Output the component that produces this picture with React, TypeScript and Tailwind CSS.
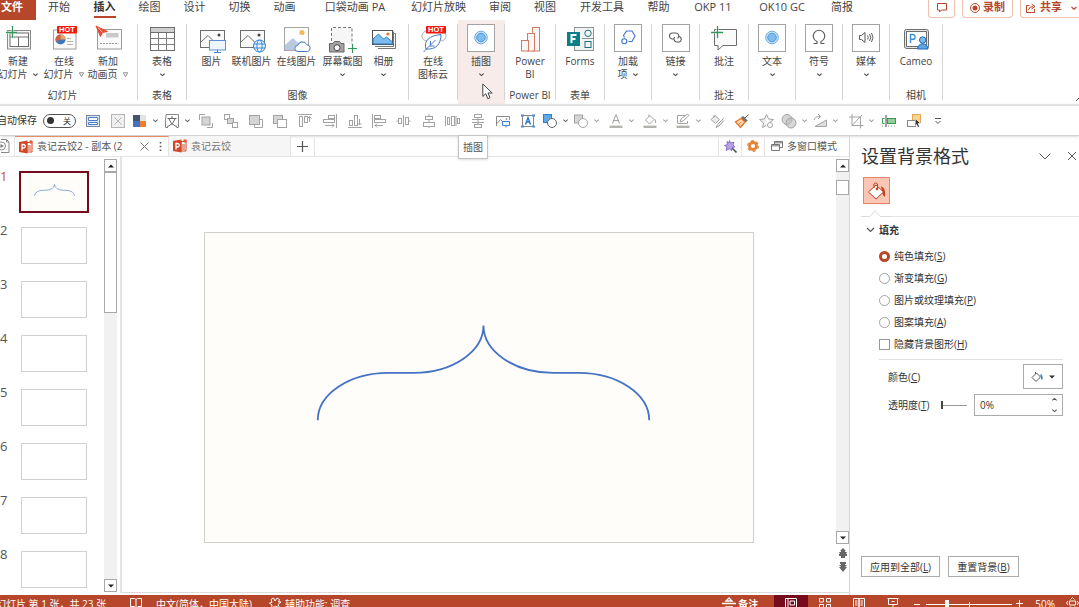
import { useState } from 'react';
import type { ReactNode } from 'react';

const FONT = "font-['Open_Sans','Noto_Sans_CJK_SC',sans-serif]";

/* ---------- small shared glyphs ---------- */

function Chevron({ className = 'w-[7px] h-[7px]' }: { className?: string }) {
  return (
    <svg viewBox="0 0 8 8" className={className} fill="none" stroke="currentColor" strokeWidth="1.2">
      <path d="M1.500 3 4 5.200 6.500 3" />
    </svg>
  );
}

function Triangle() {
  return (
    <svg viewBox="0 0 8 8" className="w-[7px] h-[7px]" fill="none" stroke="#777" strokeWidth="0.9">
      <path d="M1.500 2h5L4 6.500z" />
    </svg>
  );
}

function Hot() {
  return (
    <>
      <rect x="7" y="2" width="20" height="7.500" rx="0.8" fill="#f5180a" stroke="none" />
      <text x="17" y="8.400" textAnchor="middle" fontSize="7.500" fontWeight="800" fill="#fff" stroke="none" fontFamily="Liberation Sans, sans-serif">
        HOT
      </text>
    </>
  );
}

function Big({ children }: { children: ReactNode }) {
  return (
    <svg viewBox="0 0 28 28" className="w-7 h-7 shrink-0 overflow-visible" fill="none" stroke="#6e6e6e">
      {children}
    </svg>
  );
}

function Framed({ children }: { children: ReactNode }) {
  return (
    <span className="flex w-7 h-7 shrink-0 items-center justify-center border border-[#a3a3a3] bg-white">
      <svg viewBox="0 0 26 26" className="w-[26px] h-[26px]" fill="none" stroke="#5a5a5a">
        {children}
      </svg>
    </span>
  );
}

const blueDot = (
  <Framed>
    <circle cx="13" cy="12.500" r="6.300" fill="#d5e8f8" stroke="#5ea5e2" strokeWidth="0.9" />
    <circle cx="13" cy="12.500" r="4.300" fill="#7fbcee" stroke="#3c8fdb" strokeWidth="0.9" />
  </Framed>
);

/* ---------- ribbon data ---------- */

type Tool = { id: string; lines: ReactNode[]; icon: ReactNode; width: string };
type Group = { id: string; width: string; caption?: string; captionClass?: string; tools: Tool[]; active?: boolean };

const groups: Group[] = [
  {
    id: 'slides',
    width: 'w-[138px]',
    caption: '幻灯片',
    captionClass: 'pr-3',
    tools: [
      {
        id: 'new',
        width: 'w-9',
        lines: ['新建', <>幻灯片 <Chevron /></>],
        icon: (
          <Big>
            <rect x="3.500" y="6.500" width="23" height="18.500" fill="#f3f3f3" stroke="#8a8a8a" />
            <rect x="6" y="9" width="18.500" height="13.500" fill="#fff" />
            <path d="M6 13h18.500M14.500 13v9.500" />
            <path d="M8.500 2v12M2 8.500h11" stroke="#fff" strokeWidth="2" />
            <path d="M8.500 2v12M2 8.500h11" stroke="#2f9a5c" strokeWidth="1.300" />
          </Big>
        ),
      },
      {
        id: 'online',
        width: 'w-14',
        lines: ['在线', <>幻灯片 <Triangle /></>],
        icon: (
          <Big>
            <rect x="3.500" y="6" width="22.500" height="19" fill="#fafafa" stroke="#a0a0a0" />
            <circle cx="10.500" cy="15.500" r="5" fill="#3f77bf" stroke="none" />
            <path d="M10.500 15.500v-5a5 5 0 0 0-4.600 7z" fill="#d8603e" stroke="none" />
            <path d="M10.500 15.500v-5a5 5 0 0 1 5 5z" fill="#f0a35c" stroke="none" />
            <path d="M17 14.500h4M17 17.500h6M17 20.500h6" stroke="#aaa" strokeWidth="0.9" />
            <Hot />
          </Big>
        ),
      },
      {
        id: 'anim',
        width: 'w-8',
        lines: ['新加', <>动画页 <Triangle /></>],
        icon: (
          <Big>
            <rect x="3.500" y="5.500" width="24" height="19.500" fill="#fafafa" stroke="#9a9a9a" />
            <rect x="12" y="9" width="12.500" height="4.500" fill="#c9c9c9" stroke="none" />
            <path d="M6 19.500h18.500" strokeDasharray="2 1" stroke="#999" />
            <path d="M2 2 13.500 7.500 8.500 8.500 6.500 12.500z" fill="#ea4a31" stroke="#ea4a31" />
            <path d="m4 3.500 4.500 5" stroke="#fff" strokeWidth="0.7" />
          </Big>
        ),
      },
    ],
  },
  {
    id: 'table',
    width: 'w-[49px]',
    caption: '表格',
    tools: [
      {
        id: 'table',
        width: 'w-12',
        lines: ['表格', <Chevron />],
        icon: (
          <Big>
            <rect x="2.500" y="3.500" width="24" height="23" fill="#fff" />
            <rect x="2.500" y="3.500" width="24" height="5" fill="#cfcfcf" />
            <path d="M2.500 14.500h24M2.500 20.500h24M10.500 8.500v18M18.500 8.500v18" stroke="#7d7d7d" />
          </Big>
        ),
      },
    ],
  },
  {
    id: 'images',
    width: 'w-[222px]',
    caption: '图像',
    tools: [
      {
        id: 'picture',
        width: 'w-10',
        lines: ['图片'],
        icon: (
          <Big>
            <rect x="2.500" y="6.500" width="24" height="17" fill="#fafafa" />
            <path d="m3 18 7-6.500 7 7" />
            <circle cx="21" cy="11" r="1.500" fill="#444" stroke="none" />
            <rect x="11.500" y="16.500" width="16" height="9.500" fill="#eef5fc" stroke="#5b90d6" />
            <path d="M19.500 26v2M16 28.500h7" stroke="#3f7fd0" />
          </Big>
        ),
      },
      {
        id: 'online-picture',
        width: 'w-10',
        lines: ['联机图片'],
        icon: (
          <Big>
            <rect x="2.500" y="6.500" width="24" height="17" fill="#fafafa" />
            <path d="m3 18 7-6.500 7 7" />
            <circle cx="21" cy="11" r="1.500" fill="#444" stroke="none" />
            <circle cx="21.500" cy="22" r="6" fill="#eaf4fd" stroke="#2c82d2" />
            <ellipse cx="21.500" cy="22" rx="2.600" ry="6" stroke="#2c82d2" strokeWidth="0.9" />
            <path d="M16 20h11M16 24h11" stroke="#2c82d2" strokeWidth="0.9" />
          </Big>
        ),
      },
      {
        id: 'web-picture',
        width: 'w-[50px]',
        lines: ['在线图片'],
        icon: (
          <Big>
            <rect x="1.500" y="3.500" width="24" height="23" fill="#fdfdfd" stroke="#a5a5a5" />
            <path d="M2 26V21l8-7 5 5 3-2 7 6v3z" fill="#b9c9de" stroke="none" />
            <circle cx="19" cy="8.500" r="2.600" fill="#f0bb5e" stroke="none" />
            <path d="M15 27.500a3 3 0 0 1-.3-6 5 5 0 0 1 9.300-.8 3.500 3.500 0 0 1 .8 6.800z" fill="#fff" stroke="#4377c8" />
          </Big>
        ),
      },
      {
        id: 'screenshot',
        width: 'w-[42px]',
        lines: ['屏幕截图', <Chevron />],
        icon: (
          <Big>
            <path d="M2.500 17V3.500h20.500V20" strokeDasharray="3 2" stroke="#777" fill="#f6f6f6" />
            <path d="M.5 19.500h3.500l1.500-2h5l1.500 2h3v8.500H.5z" fill="#a5a5a5" stroke="#666" />
            <circle cx="8" cy="23.700" r="3" fill="#fff" stroke="#444" />
            <path d="M23.500 20v9M19 24.500h9" stroke="#2f9a5c" strokeWidth="1.200" />
          </Big>
        ),
      },
      {
        id: 'album',
        width: 'w-10',
        lines: ['相册', <Chevron />],
        icon: (
          <Big>
            <path d="M8 24.500h17.500V9.500H22M5 22.500h18.500V7.500" stroke="#777" />
            <rect x="2.500" y="6.500" width="20" height="14" fill="#fff" stroke="#555" />
            <path d="m3 15 5.500-5 5 5 3-2 6 5v2H3z" fill="#7fbcee" stroke="#2474c4" strokeWidth="0.9" />
            <circle cx="18" cy="10" r="1.600" fill="#e4732f" stroke="none" />
          </Big>
        ),
      },
    ],
  },
  {
    id: 'icon-cloud',
    width: 'w-[49px]',
    tools: [
      {
        id: 'cloud',
        width: 'w-12',
        lines: ['在线', '图标云'],
        icon: (
          <Big>
            <path d="M8 7a5 5 0 1 0 0 10M22 7a4.500 4.500 0 0 1 0 10" stroke="#b0b0b0" />
            <path d="M7 25C4.500 17 10 11.500 22 10.500 22 20 17 26 7 25z" fill="#fff" stroke="#4377c8" />
            <path d="M4.500 28 16.500 16M11.500 21v-4M10.500 22h5" stroke="#4377c8" />
            <Hot />
          </Big>
        ),
      },
    ],
  },
  {
    id: 'illustrations',
    width: 'w-[47px]',
    active: true,
    tools: [{ id: 'illus', width: 'w-11', lines: ['插图', <Chevron />], icon: blueDot }],
  },
  {
    id: 'powerbi',
    width: 'w-[51px]',
    caption: 'Power BI',
    tools: [
      {
        id: 'powerbi',
        width: 'w-12',
        lines: ['Power', 'BI'],
        icon: (
          <Big>
            <g fill="#fdf8f6" stroke="#cf7b66">
              <rect x="16.500" y="3.500" width="7" height="23.500" />
              <rect x="11.500" y="9.500" width="7" height="17.500" />
              <rect x="5.500" y="16.500" width="7" height="10.500" />
            </g>
          </Big>
        ),
      },
    ],
  },
  {
    id: 'forms',
    width: 'w-[49px]',
    caption: '表单',
    tools: [
      {
        id: 'forms',
        width: 'w-12',
        lines: ['Forms'],
        icon: (
          <Big>
            <rect x="8.500" y="3.500" width="19" height="23" fill="#f2f4f4" stroke="#8d9696" />
            <path d="M16 14.500h12" stroke="#8d9696" />
            <circle cx="22" cy="9.300" r="3.200" stroke="#1d6f80" />
            <rect x="19" y="17.500" width="6" height="6" stroke="#1d6f80" />
            <rect x="1" y="8" width="13" height="14" fill="#0b7f86" stroke="none" />
            <path d="M5.500 19v-8h5M5.500 15h4" stroke="#fff" strokeWidth="2" />
          </Big>
        ),
      },
    ],
  },
  {
    id: 'addins',
    width: 'w-[47px]',
    tools: [
      {
        id: 'addins',
        width: 'w-11',
        lines: ['加载', <>项 <Chevron /></>],
        icon: (
          <Framed>
            <path d="M9.500 12.500 8.500 10.500l3-4.500h5.500l3 5-3 5.500h-3.500" stroke="#3b73c9" strokeWidth="1.100" />
            <circle cx="9.300" cy="16.300" r="2.500" stroke="#3b73c9" strokeWidth="1.100" />
          </Framed>
        ),
      },
    ],
  },
  {
    id: 'links',
    width: 'w-12',
    tools: [
      {
        id: 'links',
        width: 'w-11',
        lines: ['链接', <Chevron />],
        icon: (
          <Framed>
            <path
              d="M11 14H9.500a3 3 0 0 1 0-6H13a3 3 0 0 1 1.500 5.500M15.500 11.500H16.500a3 3 0 0 1 0 5.500H13.500a3 3 0 0 1-1.800-5"
              strokeWidth="1.100"
            />
          </Framed>
        ),
      },
    ],
  },
  {
    id: 'comments',
    width: 'w-[49px]',
    caption: '批注',
    tools: [
      {
        id: 'comment',
        width: 'w-12',
        lines: ['批注'],
        icon: (
          <Big>
            <path d="M4.500 5.500h22v16H13l-5 4.500v-4.500H4.500z" fill="#fafafa" />
            <path d="M7.500 2v12M1 8.500h12" stroke="#fff" strokeWidth="2" />
            <path d="M7.500 2v12M1 8.500h12" stroke="#2f9a5c" strokeWidth="1.300" />
          </Big>
        ),
      },
    ],
  },
  {
    id: 'text',
    width: 'w-[47px]',
    tools: [{ id: 'text', width: 'w-11', lines: ['文本', <Chevron />], icon: blueDot }],
  },
  {
    id: 'symbols',
    width: 'w-[47px]',
    tools: [
      {
        id: 'symbols',
        width: 'w-11',
        lines: ['符号', <Chevron />],
        icon: (
          <Framed>
            <path d="M7.500 18.500h3.500v-2a5.800 5.800 0 1 1 4 0v2h3.500" strokeWidth="1.100" />
          </Framed>
        ),
      },
    ],
  },
  {
    id: 'media',
    width: 'w-[47px]',
    tools: [
      {
        id: 'media',
        width: 'w-11',
        lines: ['媒体', <Chevron />],
        icon: (
          <Framed>
            <path d="M6.500 10.500h2L12 7.500v10l-3.500-3h-2zM14.500 10.500q1.500 2 0 4M16.500 9q2.500 3.500 0 7M18.500 8q3 4.500 0 9" />
          </Framed>
        ),
      },
    ],
  },
  {
    id: 'camera',
    width: 'w-[53px]',
    caption: '相机',
    tools: [
      {
        id: 'cameo',
        width: 'w-12',
        lines: ['Cameo'],
        icon: (
          <Big>
            <rect x="2.500" y="5.500" width="24" height="19" rx="2" fill="#e4e4e4" />
            <rect x="4.500" y="7.500" width="20" height="15" fill="#fff" />
            <path d="M8.500 19v-8.500h2.200a2.300 2.300 0 0 1 0 4.800H8.500" stroke="#3c8fdb" strokeWidth="1.400" />
            <path d="M15.500 25a5 5 0 0 1 10.500 0z" fill="#5aa5e6" stroke="#1c6ab8" />
            <circle cx="20.700" cy="16" r="3.200" fill="#7fbcee" stroke="#1c6ab8" />
          </Big>
        ),
      },
    ],
  },
];

const tabs = [
  { label: '开始', width: 'w-[46px]' },
  { label: '插入', width: 'w-[45px]', active: true },
  { label: '绘图', width: 'w-[45px]' },
  { label: '设计', width: 'w-[45px]' },
  { label: '切换', width: 'w-[45px]' },
  { label: '动画', width: 'w-[45px]' },
  { label: '口袋动画 PA', width: 'w-[96px]' },
  { label: '幻灯片放映', width: 'w-[71px]' },
  { label: '审阅', width: 'w-[52px]' },
  { label: '视图', width: 'w-[38px]' },
  { label: '开发工具', width: 'w-[76px]' },
  { label: '帮助', width: 'w-[37px]' },
  { label: 'OKP 11', width: 'w-[72px]' },
  { label: 'OK10 GC', width: 'w-[66px]' },
  { label: '简报', width: 'w-[54px]' },
];

function TabBar() {
  return (
    <div className="flex h-5 shrink-0 items-start text-[11px] leading-[14px] text-[#444]">
      <button className="flex h-5 w-9 shrink-0 justify-center whitespace-nowrap bg-[#b7472a] pr-3 font-bold text-white">文件</button>
      {tabs.map((tab) => (
        <button key={tab.label} className={`flex shrink-0 flex-col items-center whitespace-nowrap ${tab.width}`}>
          <span className={tab.active ? 'border-b-2 border-[#b7472a] pb-0.5 font-bold text-[#333]' : ''}>{tab.label}</span>
        </button>
      ))}
      <div className="ml-auto flex shrink-0 gap-[7px] font-bold text-[#b7472a]">
        <button aria-label="批注" className="flex h-[18px] w-[27px] items-start justify-center rounded-b-sm border border-t-0 border-[#f0c0ae] pt-[3px]">
          <svg viewBox="0 0 12 10" className="h-[10px] w-3" fill="none" stroke="currentColor">
            <path d="M1.500.500h9v6.500H5.500l-2 2V7h-2z" />
          </svg>
        </button>
        <button className="flex h-[18px] w-[51px] items-start justify-center gap-[3px] whitespace-nowrap rounded-b-sm border border-t-0 border-[#f0c0ae]">
          <svg viewBox="0 0 10 10" className="mt-[3px] h-[10px] w-[10px]" fill="none" stroke="currentColor">
            <circle cx="5" cy="5" r="4.500" />
            <circle cx="5" cy="5" r="2.500" fill="currentColor" stroke="none" />
          </svg>
          录制
        </button>
        <button className="flex h-[18px] w-[59px] items-start gap-1 whitespace-nowrap rounded-bl-sm border border-r-0 border-t-0 border-[#f0c0ae] pl-[5px]">
          <svg viewBox="0 0 10 10" className="mt-[3px] h-[10px] w-[10px] shrink-0" fill="none" stroke="currentColor">
            <path d="M3.500 2.500H.5v7h8V6M2.500 7Q3 3.500 7 3.500M5.500 1 9 3.500 5.500 6" />
          </svg>
          共享
          <Chevron className="mt-1 ml-1 h-2 w-2 shrink-0" />
        </button>
      </div>
    </div>
  );
}

function Ribbon() {
  return (
    <div className="flex h-[84px] shrink-0 text-[10px] leading-[13px] text-[#444]">
      {groups.map((group) => (
        <section key={group.id} className={`flex shrink-0 ${group.width} ${group.active ? 'bg-[#f7ecea]' : ''}`}>
          <div className="flex min-w-0 flex-1 flex-col justify-between pb-0.5">
            <div className={`flex pt-1 ${group.id === 'slides' ? '' : 'justify-center'}`}>
              {group.tools.map((tool) => (
                <button key={tool.id} className={`flex shrink-0 flex-col items-center ${tool.width}`}>
                  {tool.icon}
                  <span className="mt-[3px] flex flex-col items-center">
                    {tool.lines.map((line, i) => (
                      <span key={i} className="flex h-[13px] items-center gap-1 whitespace-nowrap">
                        {line}
                      </span>
                    ))}
                  </span>
                </button>
              ))}
            </div>
            {group.caption && (
              <div className={`flex justify-center whitespace-nowrap ${group.captionClass ?? ''}`}>{group.caption}</div>
            )}
          </div>
          <span className="mt-1 h-[76px] w-px bg-[#d4d4d4]" />
        </section>
      ))}
      <button aria-label="折叠功能区" className="mt-auto ml-auto mb-px h-2 w-1 overflow-hidden">
        <svg viewBox="0 0 4 8" className="h-2 w-1" fill="none" stroke="#555">
          <path d="m1 6 4-4" />
        </svg>
      </button>
    </div>
  );
}

/* ---------- quick access toolbar ---------- */

function Small({ children, color = '#a3a3a3' }: { children: ReactNode; color?: string }) {
  return (
    <svg viewBox="0 0 16 16" className="h-4 w-4 shrink-0" fill="none" stroke={color}>
      {children}
    </svg>
  );
}

function QuickDrop({ label, width, muted, children }: { label: string; width: string; muted?: boolean; children: ReactNode }) {
  return (
    <button aria-label={label} className={`flex shrink-0 items-center gap-1 pl-0.5 ${width} ${muted ? 'text-[#a0a0a0]' : 'text-[#666]'}`}>
      {children}
      <Chevron />
    </button>
  );
}

const arrangeTools: [string, ReactNode][] = [
  ['组合', <Small><path d="M1.500 7V1.500H7M14.500 10v4.500H9" /><rect x="4" y="4" width="8" height="8" fill="#d5d5d5" /></Small>],
  ['取消组合', <Small><rect x="1.500" y="1.500" width="5" height="5" /><rect x="4.500" y="5.500" width="6" height="5" fill="#d5d5d5" /><rect x="9.500" y="9.500" width="5" height="5" fill="#fff" /></Small>],
  ['上移', <Small><path d="M12 6.500h2.500v8H6.500V12" /><rect x="1.500" y="2.500" width="10" height="9" fill="#d5d5d5" /></Small>],
  ['下移', <Small><rect x="1.500" y="2.500" width="9" height="8" fill="#d5d5d5" /><rect x="5.500" y="6.500" width="9" height="8" fill="#fff" /></Small>],
  ['顶端对齐', <Small><path d="M1 1.500h14M12.500 9V3.500M10.500 5.500l2-2 2 2" /><rect x="2.500" y="3.500" width="3" height="10" /><rect x="7.500" y="3.500" width="3" height="6" /></Small>],
  ['右对齐', <Small><path d="M14.500 1v14M3 12.500h9M10 10.500l2 2-2 2" /><rect x="6.500" y="2.500" width="6" height="3" /><rect x="1.500" y="6.500" width="11" height="3" /></Small>],
  ['底端对齐', <Small><path d="M1 14.500h14M12.500 6v6M10.500 10l2 2 2-2" /><rect x="2.500" y="7.500" width="3" height="5" /><rect x="7.500" y="2.500" width="3" height="10" /></Small>],
  ['左对齐', <Small><path d="M1.500 1v14M4 12.500h8M6 10.500l-2 2 2 2" /><rect x="3.500" y="2.500" width="6" height="3" /><rect x="3.500" y="6.500" width="11" height="3" /></Small>],
  ['水平居中', <Small><rect x="2.500" y="5.500" width="3" height="5" /><rect x="9.500" y="4.500" width="3" height="7" /><path d="M7.500 2v12M.5 8h2M12.500 8h2" /></Small>],
  ['垂直居中', <Small><rect x="4.500" y="3.500" width="7" height="3" /><rect x="2.500" y="9.500" width="11" height="4" /><path d="M8 1v2.500M8 6.500v3M8 13.500V15" /></Small>],
  ['横向分布', <Small><rect x="2.500" y="4.500" width="2" height="7" /><rect x="6.500" y="3.500" width="3" height="9" /><rect x="12.500" y="5.500" width="2" height="5" /><path d="M.5 3v10M11 3v10" /></Small>],
  ['纵向分布', <Small><rect x="4.500" y="1.500" width="7" height="3" /><rect x="4.500" y="11.500" width="7" height="3" /><path d="M2 6.500h12M2 9.500h12M8 4.500v7" /></Small>],
  ['更改图片', <Small color="#888"><path d="M1.500 13V3.500h13V7M1.500 11l4-4.500 3 3" /><circle cx="11.500" cy="6" r=".8" fill="#666" stroke="none" /><path d="M7.500 8.500h7v4h-7zM11 12.500v2" stroke="#3f7fd0" fill="#eef5fc" /></Small>],
  ['文本框', <Small color="#888"><rect x="2.500" y="2.500" width="11" height="11" /><path d="m5.500 11.500 2.500-7 2.500 7M6.500 9h3" stroke="#2474c4" strokeWidth="1.300" /><path d="M1 2.500h3M12 2.500h3M1 13.500h3M12 13.500h3" stroke="#4a8fd6" strokeWidth="2" /></Small>],
];

function QuickAccess() {
  const [autosave, setAutosave] = useState(false);
  return (
    <div className="flex h-8 shrink-0 items-center overflow-hidden border-t-2 border-b border-t-[#e1e1e1] border-b-[#d2d2d2] text-[10px] text-[#333] shadow-sm">
      <label htmlFor="autosave" className="-ml-1 w-[41px] shrink-0 text-right whitespace-nowrap">自动保存</label>
      <button
        id="autosave"
        role="switch"
        aria-checked={autosave}
        onClick={() => setAutosave(!autosave)}
        className="mr-[5px] ml-1.5 flex h-[14px] w-[33px] shrink-0 items-center gap-[9px] rounded-full border border-[#555] pl-[3px] text-[8px] leading-3"
      >
        <span className="h-[7px] w-[7px] rounded-full bg-[#333]" />
        关
      </button>
      <button aria-label="幻灯片母版" className="flex w-6 shrink-0 justify-center">
        <Small color="#4a7fd0"><rect x="1.500" y="2.500" width="13" height="11" fill="#dfeaf8" stroke="#7b8798" /><path d="M3.500 4.500h9v3h-9zM3.500 9.500h9v2h-9z" fill="#fff" /></Small>
      </button>
      <button aria-label="关闭" className="flex w-[25px] shrink-0 justify-center">
        <Small color="#b5b5b5"><rect x="1.500" y="1.500" width="13" height="13" fill="#f0f0f0" /><path d="m4.500 4.500 7 7M11.500 4.500l-7 7" /></Small>
      </button>
      <QuickDrop label="主题颜色" width="w-8">
        <Small><path d="M1 2h7v6H1z" fill="#44546a" stroke="none" /><path d="M8 2h6v6H8z" fill="#e3e3e3" stroke="none" /><path d="M1 8h7v6H1z" fill="#4472c4" stroke="none" /><path d="M8 8h6v6H8z" fill="#ed7d31" stroke="none" /></Small>
      </QuickDrop>
      <QuickDrop label="字体" width="w-8">
        <Small color="#666"><path d="M2 5V1.500h12.500v13h-2M1.500 5v9.500H4" stroke="#888" /><path d="M8 3v2.500M3.500 5.500h9M5 6q1 5 8 8M11 6q-1 5-8 8" /></Small>
      </QuickDrop>
      <div className="grid w-[346px] shrink-0 grid-cols-14">
        {arrangeTools.map(([label, icon]) => (
          <button key={label} aria-label={label} className="flex justify-center">{icon}</button>
        ))}
      </div>
      <QuickDrop label="形状" width="w-[31px]">
        <Small color="#666"><rect x="1.500" y="1.500" width="8" height="8" fill="#5ea9e8" stroke="#2c82d2" /><circle cx="10" cy="10" r="4.500" fill="#fff" /></Small>
      </QuickDrop>
      <QuickDrop label="合并形状" width="w-[35px]" muted>
        <Small><rect x="1.500" y="2" width="8" height="8" fill="#d5d5d5" /><circle cx="10" cy="10" r="4.500" fill="#fff" /></Small>
      </QuickDrop>
      <QuickDrop label="字体颜色" width="w-[34px]" muted>
        <Small><path d="m4.500 10.500 3.500-9 3.500 9M5.500 7.500h5" /><path d="M1.500 13.800h13" stroke="#b3b3b0" strokeWidth="2.400" /></Small>
      </QuickDrop>
      <QuickDrop label="形状填充" width="w-[33px]" muted>
        <Small><path d="m3.500 7 4.500-4.500L12 6.500 7.500 11zM7 4V1.500M12.500 6q2 2 1 4" /><path d="M1.500 13.800h13" stroke="#b3b3b0" strokeWidth="2.400" /></Small>
      </QuickDrop>
      <QuickDrop label="形状轮廓" width="w-[31px]" muted>
        <Small><path d="M11 2.500H2.500v8h10V8M5 9l1-3 6.500-5 1.500 1.500L8 8z" /><path d="M1.500 13.800h13" stroke="#b3b3b0" strokeWidth="2.400" /></Small>
      </QuickDrop>
      <button aria-label="取色" className="flex w-[25px] shrink-0 justify-center">
        <Small><path d="m2 6.500 4-4 4.500 4-4 4zM5 4.500V2M14.500 5.500l-6 6-1.500 3 3-1.500 5-5.500" fill="#ececec" /></Small>
      </button>
      <button aria-label="格式刷" className="flex w-[25px] shrink-0 justify-center">
        <Small color="#555"><path d="M14.500 1.500 11 5M9 3.500l4 4-1.500 1.500-4-4z" fill="#777" /><path d="M7 5.500 1.500 9l5 5.500L11 9z" fill="#f9d9bd" stroke="#e87722" strokeWidth="1.400" /><path d="m4 12 3-3M6.500 14l3-3.500" stroke="#e87722" /></Small>
      </button>
      <button aria-label="动画" className="flex w-[25px] shrink-0 justify-center">
        <Small><path d="m7.500 1.500 2 4.500 5 .5L11 9.500M7.500 1.500 5.500 6l-5 .5 4 3.500-1 4.500 3.500-2" fill="#efefef" /><circle cx="11" cy="12" r="2.500" /></Small>
      </button>
      <QuickDrop label="形状运算" width="w-[31px]" muted>
        <Small><circle cx="6" cy="6.500" r="5" fill="#d5d5d5" /><circle cx="10" cy="10" r="5" fill="#bdbdbd" fillOpacity=".6" /></Small>
      </QuickDrop>
      <QuickDrop label="旋转" width="w-9" muted>
        <Small><path d="M14.500 7v6.500H3z" fill="#ddd" /><path d="M2 7Q2.500 3.500 8 3.500M6 1l2.500 2.500L6 6" /></Small>
      </QuickDrop>
      <QuickDrop label="裁剪" width="w-[30px]" muted>
        <Small><path d="M4 1v11.500h11.500M1 4h11.500v11.500M4 12.500 14 2" /></Small>
      </QuickDrop>
      <button aria-label="对齐" className="flex w-[25px] shrink-0 justify-center">
        <Small color="#3a9a4b"><rect x="6.500" y="5.500" width="8" height="5" fill="#8fd19a" /><path d="M3.500 5.500h-2v5h2" /><path d="M5 2v12" stroke="#444" /><path d="M1 13h14" stroke="#888" strokeDasharray="1 2" /></Small>
      </button>
      <button aria-label="选择窗格" className="flex w-[25px] shrink-0 justify-center">
        <Small color="#888"><rect x="6.500" y="1.500" width="8" height="8" fill="#fbd38b" stroke="#e8a55a" /><rect x="1.500" y="7.500" width="8" height="6" fill="#fff" /><path d="m9.500 5.500 5 5H12l1.500 3-1.500 1-1.500-3-1.500 1z" fill="#333" stroke="#fff" strokeWidth=".6" /></Small>
      </button>
      <button aria-label="自定义快速访问工具栏" className="flex w-6 shrink-0 justify-center">
        <svg viewBox="0 0 8 8" className="h-2 w-2" fill="none" stroke="#555"><path d="M1 1.500h6M1.500 4 4 6.500 6.500 4" /></svg>
      </button>
    </div>
  );
}

/* ---------- documents ---------- */

function PptMark() {
  return (
    <svg viewBox="0 0 14 14" className="h-[14px] w-[14px] shrink-0">
      <path d="M8 2.500h5v9.500H8z" fill="#fff" stroke="#d24726" />
      <path d="M9 6h3M9 8h3M9 10h3" stroke="#d24726" />
      <path d="M0 2 8.500.500v13L0 12z" fill="#d24726" />
      <path d="M3 10.500v-6h1.500a1.700 1.700 0 0 1 0 3.500H3" fill="none" stroke="#fff" strokeWidth="1.300" />
      <circle cx="12" cy="2" r="1.800" fill="#f0562f" />
    </svg>
  );
}

function DocTabs() {
  return (
    <div className="flex h-[21px] shrink-0 border-b border-[#e4e4e4] text-[10px] text-[#555]">
      <button aria-label="文件列表" className="flex w-[15px] shrink-0 items-center overflow-hidden border-r border-[#e4e4e4]">
        <svg viewBox="0 0 10 14" className="h-[14px] w-[10px]" fill="none" stroke="#888">
          <path d="M1 .5h5.500L9 3v10.500H1M6.500.500V3H9" />
          <circle cx="1.500" cy="7" r="4" fill="#fff" />
          <path d="M.5 5v4L4 7z" fill="#777" stroke="none" />
        </svg>
      </button>
      <div className="flex w-[154px] shrink-0 items-center border-t border-r border-t-[#ec8a62] border-r-[#e4e4e4] pl-1">
        <PptMark />
        <button className="ml-1 whitespace-nowrap">袁记云饺2 - 副本 (2</button>
        <button aria-label="关闭标签" className="ml-auto">
          <svg viewBox="0 0 9 9" className="h-[9px] w-[9px]" stroke="#777"><path d="m.5.5 8 8M8.500.500l-8 8" /></svg>
        </button>
        <button aria-label="更多" className="mr-1.5 ml-2.5">
          <svg viewBox="0 0 3 9" className="h-[9px] w-[3px]" fill="#555"><path d="M.7 0h1.600v1.600H.7zM.7 3.700h1.600v1.600H.7zM.7 7.400h1.600V9H.7z" /></svg>
        </button>
      </div>
      <div className="flex w-[122px] shrink-0 items-center border-r border-[#e4e4e4] bg-[#f6f6f6] pl-1 text-[#777]">
        <PptMark />
        <button className="ml-1">袁记云饺</button>
      </div>
      <button aria-label="新建标签" className="flex w-6 shrink-0 items-center justify-center border-r border-[#e4e4e4]">
        <svg viewBox="0 0 11 11" className="h-[11px] w-[11px]" stroke="#555" strokeWidth="1.200"><path d="M5.500 0v11M0 5.500h11" /></svg>
      </button>
      <div className="ml-auto flex">
        <button aria-label="魔棒" className="flex w-[23px] items-center justify-center border-l border-[#e4e4e4]">
          <svg viewBox="0 0 13 13" className="h-[13px] w-[13px]">
            <path d="m7.500 7.500 5 5" stroke="#555" strokeWidth="1.600" />
            <path d="M5.500.500 6.500 3l3.500-1-1 3 2 2-3 .8-.5 3-2.200-2L2 10.500l.9-3.500L.5 5.500l2.800-1L3 1.500 5 3z" fill="#b9a0ea" stroke="#6c4fb5" strokeWidth=".7" />
          </svg>
        </button>
        <button aria-label="设置" className="flex w-[23px] items-center justify-center border-l border-[#e4e4e4]">
          <svg viewBox="0 0 12 12" className="h-3 w-3" fill="none" stroke="#e2843c">
            <circle cx="6" cy="6" r="3.500" strokeWidth="2.800" />
            <circle cx="6" cy="6" r="5.300" strokeWidth="1.300" strokeDasharray="2.800 2.750" />
          </svg>
        </button>
        <button className="flex w-[85px] items-center gap-1 whitespace-nowrap border-l border-[#e4e4e4] pl-1.5">
          <svg viewBox="0 0 12 10" className="h-[10px] w-3" fill="#fff" stroke="#777">
            <path d="M3.500.500h8v6h-8zM3.500 1.800h8" />
            <path d="M.5 3.500h8v6h-8zM.5 4.800h8" />
          </svg>
          多窗口模式
        </button>
      </div>
    </div>
  );
}

function ScrollArrow({ up }: { up?: boolean }) {
  return (
    <button aria-label={up ? '向上滚动' : '向下滚动'} className="flex h-[13px] w-[13px] shrink-0 items-center justify-center border border-[#a8a8a8] bg-white">
      <svg viewBox="0 0 6 4" className="h-1 w-1.5" fill="#222">
        <path d={up ? 'M0 3.500 3 .5l3 3z' : 'M0 .5h6l-3 3z'} />
      </svg>
    </button>
  );
}

function Brace({ stroke }: { stroke: string }) {
  return (
    <svg viewBox="0 0 549 310" className="h-full w-full" fill="none" stroke="#4472c4" strokeWidth={stroke}>
      <path d="M112.500 188A71 47.500 0 0 1 183.500 140.500H209A70 47.500 0 0 0 279 93A70 47.500 0 0 0 349 140.500H374.500A71 47.500 0 0 1 445.500 188" />
    </svg>
  );
}

function SlideList() {
  return (
    <aside className="flex w-[122px] shrink-0 overflow-hidden border-r-2 border-[#e4e4e4]">
      <ol className="w-[104px] shrink-0 pt-2">
        {[1, 2, 3, 4, 5, 6, 7, 8].map((n) => (
          <li key={n} className="flex h-[54px] text-[13px] leading-4 text-[#555]">
            <span className={`w-[19px] shrink-0 pt-[3px] ${n === 1 ? 'text-[#c8502f]' : ''}`}>{n}</span>
            <button
              aria-label={`幻灯片 ${n}`}
              className={
                n === 1
                  ? 'mt-1.5 h-[42px] w-[70px] border-2 border-[#750b1c] bg-[#fefdf9]'
                  : 'mt-2 ml-0.5 h-[37px] w-[66px] border border-[#d0d0d0] bg-white'
              }
            >
              {n === 1 && <Brace stroke="5" />}
            </button>
          </li>
        ))}
      </ol>
      <div className="mt-0.5 mb-px flex w-[13px] flex-col bg-[#f1f1f1]">
        <ScrollArrow up />
        <div className="h-[141px] border border-[#a8a8a8] bg-white" />
        <div className="mt-auto flex">
          <ScrollArrow />
        </div>
      </div>
    </aside>
  );
}

function Canvas() {
  return (
    <main className="flex min-w-0 flex-1 border-b border-[#dcdcdc]">
      <div className="min-w-0 flex-1 px-[82px] pt-[75px]">
        <div className="aspect-[549/310] w-full border border-[#cfcfcb] bg-[#fefdf9]">
          <Brace stroke="1.8" />
        </div>
      </div>
      <div className="mt-0.5 flex w-[13px] shrink-0 flex-col items-center pb-5">
        <div className="flex min-h-0 flex-1 flex-col bg-[#f1f1f1]">
          <ScrollArrow up />
          <div className="mt-2 h-[15px] border border-[#a8a8a8] bg-white" />
          <div className="mt-auto flex">
            <ScrollArrow />
          </div>
        </div>
        <button aria-label="上一张幻灯片" className="mt-1">
          <svg viewBox="0 0 8 10" className="h-[10px] w-2" fill="#666"><path d="M4 0l3 3H6v1h2L7 6h1v2H6v2H2V8H0V6h1L0 4h2V3H1z" /></svg>
        </button>
        <button aria-label="下一张幻灯片" className="mt-1">
          <svg viewBox="0 0 8 10" className="h-[10px] w-2" fill="#666"><path d="M1 0h6v2H6v1h2L6 5h2l-4 5-4-5h2L0 3h2V2H1z" /></svg>
        </button>
      </div>
    </main>
  );
}

/* ---------- format background pane ---------- */

const fills = [
  { label: '纯色填充', key: 'S' },
  { label: '渐变填充', key: 'G' },
  { label: '图片或纹理填充', key: 'P' },
  { label: '图案填充', key: 'A' },
];

function Key({ k }: { k: string }) {
  return (
    <>
      (<u className="underline-offset-1">{k}</u>)
    </>
  );
}

function FormatPane() {
  const [fill, setFill] = useState('S');
  return (
    <aside className="flex w-[230px] shrink-0 flex-col border-l border-[#d6d6d6] pb-[18px] pl-[11px] text-[10px] leading-[14px] text-[#333]">
      <header className="flex h-10 items-center text-[#555]">
        <h2 className="text-lg text-[#333]">设置背景格式</h2>
        <button aria-label="窗格选项" className="ml-auto">
          <svg viewBox="0 0 12 7" className="h-[7px] w-3" fill="none" stroke="currentColor"><path d="m.5.500 5.500 5.500 5.500-5.500" /></svg>
        </button>
        <button aria-label="关闭窗格" className="mr-0.5 ml-4">
          <svg viewBox="0 0 10 10" className="h-[10px] w-[10px]" stroke="currentColor"><path d="m1 1 8 8M9 1 1 9" /></svg>
        </button>
      </header>
      <button aria-label="填充" className="mt-px ml-0.5 flex h-[27px] w-[27px] items-center justify-center border border-[#e58468] bg-[#fbc6b3]">
        <svg viewBox="0 0 20 20" className="h-5 w-5">
          <path d="M14 5q5 2 4 11-2.500-1.500-3-5.500z" fill="#c43e1c" />
          <path d="m1.500 11 7.500-7L16.500 11 9 18z" fill="#fff" stroke="#c43e1c" />
          <path d="M7 7V3a2 2 0 0 1 3.500 0v4" fill="none" stroke="#c43e1c" />
          <circle cx="10" cy="8" r="1.300" fill="#c43e1c" />
        </svg>
      </button>
      <svg viewBox="0 0 30 7" className="mt-1.5 h-[7px] w-[30px]" fill="none" stroke="#dcdcdc"><path d="M0 6.500h9l5-6 5 6h11" /></svg>
      <div className="-mt-px ml-[30px] border-t border-[#e4e4e4]" />
      <h3 className="mt-1.5 flex items-center gap-1 pl-[5px] font-bold">
        <svg viewBox="0 0 9 6" className="h-1.5 w-[9px]" fill="none" stroke="#555" strokeWidth="1.200"><path d="m1 1 3.500 3.500L8 1" /></svg>
        填充
      </h3>
      <fieldset className="mt-3 flex flex-col gap-2 pl-[18px] leading-[14px]">
        {fills.map((f) => (
          <label key={f.key} className="flex h-[14px] items-center gap-1 whitespace-nowrap">
            <input
              type="radio"
              name="fill"
              checked={fill === f.key}
              onChange={() => setFill(f.key)}
              className="h-[11px] w-[11px] appearance-none rounded-full border border-[#a3a3a3] bg-white checked:border-3 checked:border-[#b7472a]"
            />
            <span>{f.label}<Key k={f.key} /></span>
          </label>
        ))}
        <label className="flex h-[14px] items-center gap-1 whitespace-nowrap">
          <input type="checkbox" className="h-[11px] w-[11px] appearance-none border border-[#999] bg-white checked:bg-[#b7472a]" />
          <span>隐藏背景图形<Key k="H" /></span>
        </label>
      </fieldset>
      <div className="mt-2 mr-4 ml-[18px] border-t border-[#e0e0e0]" />
      <div className="mt-1 mr-4 flex items-center justify-between pl-[27px]">
        <label htmlFor="fill-color">颜色<Key k="C" /></label>
        <button id="fill-color" className="flex h-[25px] w-10 items-center justify-center gap-1.5 border border-[#ababab]">
          <svg viewBox="0 0 12 12" className="h-3 w-3" fill="none" stroke="#555">
            <path d="m1 6.500 4.500-4.500L9.500 6 5 10.500zM4.500 3V1" />
            <path d="M9.500 3.500q2 1.500 1.200 5" stroke="#2c82d2" strokeWidth="1.500" />
          </svg>
          <svg viewBox="0 0 6 4" className="h-1 w-1.5" fill="#333"><path d="M0 .5h6l-3 3z" /></svg>
        </button>
      </div>
      <div className="mt-[5px] mr-4 flex items-center pl-[27px]">
        <label htmlFor="opacity" className="whitespace-nowrap">透明度<Key k="T" /></label>
        <input
          type="range"
          aria-label="透明度滑块"
          defaultValue={0}
          className="mr-[7px] ml-auto h-2 w-[26px] appearance-none bg-[linear-gradient(#999,#999)] bg-[length:100%_1px] bg-center bg-no-repeat [&::-webkit-slider-thumb]:h-2 [&::-webkit-slider-thumb]:w-0.5 [&::-webkit-slider-thumb]:appearance-none [&::-webkit-slider-thumb]:bg-[#444]"
        />
        <div className="flex h-[22px] w-[89px] items-center border border-[#ababab] pr-1 pl-[5px]">
          <input id="opacity" type="text" defaultValue="0%" className="w-full min-w-0 outline-none" />
          <div className="flex flex-col gap-1 text-[#555]">
            <button aria-label="增加"><Chevron className="h-[7px] w-[7px] rotate-180" /></button>
            <button aria-label="减少"><Chevron /></button>
          </div>
        </div>
      </div>
      <footer className="mt-auto flex gap-2">
        <button className="h-[21px] w-[79px] whitespace-nowrap border border-[#ababab]">应用到全部<Key k="L" /></button>
        <button className="h-[21px] w-[71px] whitespace-nowrap border border-[#ababab]">重置背景<Key k="B" /></button>
      </footer>
    </aside>
  );
}

/* ---------- status bar ---------- */

function StatusIcon({ children }: { children: ReactNode }) {
  return (
    <svg viewBox="0 0 12 12" className="mt-0.5 h-3 w-3 shrink-0" fill="none" stroke="#fff">
      {children}
    </svg>
  );
}

function StatusBar() {
  return (
    <footer className="flex h-3 shrink-0 items-start overflow-hidden bg-[#b7472a] text-[10px] leading-[18px] whitespace-nowrap text-white">
      <span className="-ml-1 w-[134px] shrink-0">幻灯片 第 1 张，共 23 张</span>
      <StatusIcon><path d="M.5 1.500h4L6 2.500l1.500-1h4v8H8l-2 2-1.500-2h-4zM6 2.500v8" /></StatusIcon>
      <button className="ml-3.5">中文(简体，中国大陆)</button>
      <button className="ml-[17px] flex gap-1">
        <StatusIcon><path d="M6 4 4.500 1 2 2.500 3 5.500.5 6l2.500 2-.5 3 3-1.500M6 4l2-3 2.500 1.500L9.500 5h2.500L9 7.500l1.500 3.500L6 9" /></StatusIcon>
        辅助功能: 调查
      </button>
      <button className="ml-auto flex gap-0.5 font-bold">
        <svg viewBox="0 0 14 12" className="mt-0.5 h-3 w-3.5" fill="none" stroke="#fff" strokeWidth="1.300"><path d="m4 4 3-3 3 3zM0 6.500h14M3 10h8" /></svg>
        备注
      </button>
      <button aria-label="普通视图" className="ml-4 flex h-3 w-[34px] justify-center bg-[#750b1c]">
        <StatusIcon><path d="M.5 1.500h11v9H.5zM3 1.500v9M5 4h4.500v4H5z" /></StatusIcon>
      </button>
      <button aria-label="幻灯片浏览" className="flex w-[34px] justify-center">
        <StatusIcon><path d="M.5 1.500h4v3.500h-4zM7.500 1.500h4v3.500h-4zM.5 7.500h4V11h-4zM7.500 7.500h4V11h-4z" /></StatusIcon>
      </button>
      <button aria-label="阅读视图" className="flex w-[34px] justify-center">
        <StatusIcon><path d="M.5 1.500H6v9H.5zM6 1.500h5.500v9H6zM2 4h2.500M2 6h2.500M2 8h2.500M7.500 4H10M7.500 6H10M7.500 8H10" /></StatusIcon>
      </button>
      <button aria-label="幻灯片放映" className="flex w-[34px] justify-center">
        <StatusIcon><path d="M.5 1.500h11M1.500 1.500v6h9v-6M6 7.500V11M3.500 11h5M4.500 4.500h3" /></StatusIcon>
      </button>
      <button aria-label="缩小" className="mt-[5px] ml-1 flex h-2 w-2 items-center">
        <span className="h-px w-1.5 bg-white" />
      </button>
      <input
        type="range"
        aria-label="缩放"
        defaultValue={23}
        className="mt-[5px] mr-1 ml-1 h-[9px] w-[86px] appearance-none bg-[linear-gradient(#fff,#fff),linear-gradient(#fff,#fff)] bg-[length:100%_1px,1px_5px] bg-center bg-no-repeat [&::-webkit-slider-thumb]:h-[9px] [&::-webkit-slider-thumb]:w-1 [&::-webkit-slider-thumb]:appearance-none [&::-webkit-slider-thumb]:bg-white"
      />
      <button aria-label="放大">
        <svg viewBox="0 0 7 7" className="mt-[5px] h-[7px] w-[7px]" stroke="#fff"><path d="M3.500 0v7M0 3.500h7" /></svg>
      </button>
      <button className="ml-3">50%</button>
      <button aria-label="适应窗口" className="ml-[11px]">
        <svg viewBox="0 0 13 12" className="mt-0.5 h-3 w-[13px]" fill="none" stroke="#fff"><path d="M3.500 4h6v4h-6zM4.500 2.500l2-2 2 2M2 4 .5 6 2 8M11 4l1.500 2L11 8M4.500 9.500l2 2 2-2" /></svg>
      </button>
    </footer>
  );
}

export default function App() {
  return (
    <div className={`relative flex h-screen flex-col overflow-hidden bg-white ${FONT}`}>
      <TabBar />
      <Ribbon />
      <QuickAccess />
      <div className="flex min-h-0 flex-1">
        <div className="flex min-w-0 flex-1 flex-col">
          <DocTabs />
          <div className="flex min-h-0 flex-1 pb-0.5">
            <SlideList />
            <Canvas />
          </div>
        </div>
        <FormatPane />
      </div>
      <StatusBar />

      {/* tooltip and pointer over the illustrations button */}
      <div role="tooltip" className="absolute top-[135px] left-[458px] flex h-6 w-[30px] items-center justify-center border border-[#c4c4c4] bg-white text-[10px] text-[#555] shadow-sm">
        插图
      </div>
      <svg viewBox="0 0 11 17" className="absolute top-[83px] left-[482px] h-[17px] w-[11px]" fill="#fff" stroke="#444">
        <path d="M.8 1v12.500l3-2.800 2 5 2.200-1-2-4.700h4.200z" />
      </svg>
    </div>
  );
}
